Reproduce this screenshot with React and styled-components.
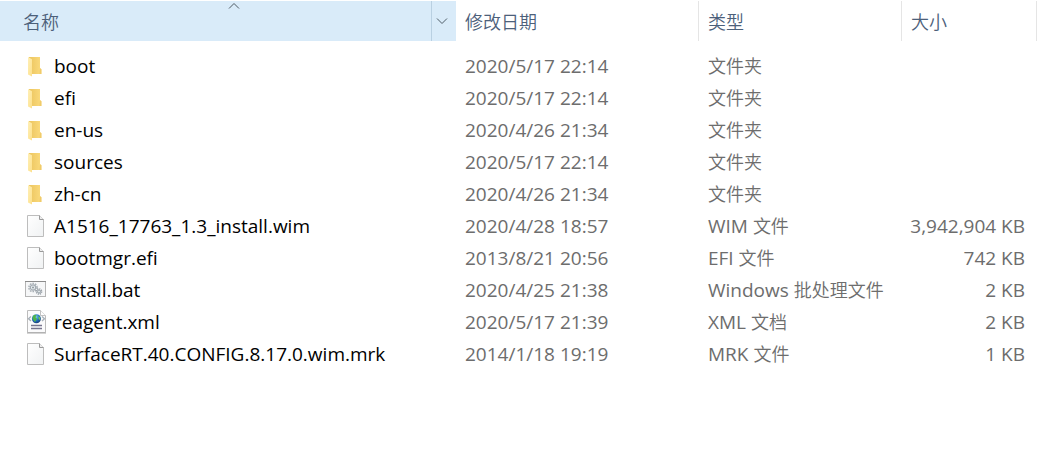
import React, { useState } from "react";
import styled, { createGlobalStyle } from "styled-components";

const GlobalStyle = createGlobalStyle`
    body {
        margin: 0;
        background: #ffffff;
        font-family: "Open Sans", "Noto Sans CJK SC", sans-serif;
    }
`;

const FileTable = styled.table`
    width: 100%;
    padding: 1px 1px 0 0;
    border-collapse: separate;
    border-spacing: 0;
    table-layout: fixed;
    tbody::before {
        content: "";
        display: block;
        height: 9px;
    }
`;

const Column = styled.col`
    width: ${props => props.$width || "auto"};
`;

const HeadCell = styled.th`
    position: relative;
    height: 40px;
    padding: 0;
    border-right: ${props => (props.$sorted ? "none" : "1px solid #e5e5e5")};
    background: ${props => (props.$sorted ? "#d9ebf9" : "#ffffff")};
    font-weight: normal;
`;

const HeadContent = styled.div`
    display: flex;
    height: 40px;
`;

const SortButton = styled.button`
    flex: 1;
    padding: 0 0 0 ${props => (props.$first ? "23px" : "9px")};
    border: none;
    background: none;
    color: #4c607a;
    font-family: "Noto Sans CJK SC", sans-serif;
    font-size: 18px;
    font-weight: 350;
    line-height: 40px;
    text-align: left;
`;

const FilterButton = styled.button`
    display: flex;
    align-items: center;
    justify-content: center;
    width: 25px;
    padding: 0 4px 0 0;
    border: none;
    border-left: 1px solid #b9d0e2;
    background: none;
`;

const SortArrow = styled.svg`
    position: absolute;
    top: 1px;
    left: 50%;
`;

const Cell = styled.td`
    height: 32px;
    padding: 0 0 0 9px;
    color: #6d6d6d;
    font-size: 19px;
    line-height: 32px;
    white-space: nowrap;
`;

const SizeCell = styled(Cell)`
    padding: 0 12px 0 0;
    text-align: right;
`;

const NameCell = styled(Cell)`
    padding: 0 0 0 24px;
    color: #000000;
`;

const FileName = styled.div`
    display: flex;
    align-items: center;
    gap: 6px;
`;

const Han = styled.span`
    font-family: "Noto Sans CJK SC", sans-serif;
    font-size: 18px;
    font-weight: 350;
    line-height: 20px;
`;

const Icon = styled.svg`
    flex: none;
    width: 24px;
    height: 24px;
`;

function FolderIcon() {
    return (
        <Icon viewBox="0 0 24 24" aria-hidden="true">
            <defs>
                <linearGradient id="folderFront" x1="0" y1="0" x2="1" y2="1">
                    <stop offset="0" stopColor="#fff0b8" />
                    <stop offset="1" stopColor="#fde08a" />
                </linearGradient>
                <linearGradient id="folderBack" x1="0" y1="0" x2="1" y2="0">
                    <stop offset="0" stopColor="#ecc55f" />
                    <stop offset="1" stopColor="#fbdb7d" />
                </linearGradient>
            </defs>
            <path d="M5 3H16V14L17.400 15.500V20H8L5 18Z" fill="url(#folderBack)" />
            <path d="M16 14L17.400 15.500V20H15.500Z" fill="#f0cb6b" />
            <path d="M4 3L8 5.300V22.600L4 20.500Z" fill="url(#folderFront)" />
        </Icon>
    );
}

function DocumentIcon() {
    return (
        <Icon viewBox="0 0 24 24" aria-hidden="true">
            <defs>
                <linearGradient id="paper" x1="0" y1="0" x2="1" y2="1">
                    <stop offset="0" stopColor="#ffffff" />
                    <stop offset="1" stopColor="#f0f2f3" />
                </linearGradient>
            </defs>
            <path d="M3.500 1.500H15.500L19.500 5.500V22.500H3.500Z" fill="url(#paper)" stroke="#bdbdbd" />
            <path d="M15.500 1.500V5.500H19.500" fill="#ededed" stroke="#9a9a9a" />
        </Icon>
    );
}

function BatchIcon() {
    return (
        <Icon viewBox="0 0 24 24" aria-hidden="true">
            <rect x="1.500" y="3.500" width="20" height="15" fill="#f6f7f8" stroke="#b5b5b5" />
            <path d="M1 3.500H22" stroke="#8c8c8c" />
            <circle cx="9" cy="9.500" r="4.100" fill="none" stroke="#a9b0b6" strokeWidth="1.500" strokeDasharray="1.600 1" />
            <circle cx="9" cy="9.500" r="2.700" fill="#e8edf0" stroke="#a3abb2" strokeWidth="1.200" />
            <circle cx="9" cy="9.500" r="1" fill="#8f999f" />
            <circle cx="15" cy="13.500" r="2.700" fill="none" stroke="#939ba2" strokeWidth="1.300" strokeDasharray="1.200 .9" />
            <circle cx="15" cy="13.500" r="1.600" fill="#dce3e7" stroke="#8e989f" />
        </Icon>
    );
}

function XmlIcon() {
    return (
        <Icon viewBox="0 0 24 24" aria-hidden="true">
            <defs>
                <radialGradient id="globe" cx=".4" cy=".3" r=".75">
                    <stop offset="0" stopColor="#8ed4f5" />
                    <stop offset=".5" stopColor="#2579c5" />
                    <stop offset="1" stopColor="#173978" />
                </radialGradient>
            </defs>
            <path d="M3.500 .5H16.500L21.500 5.500V22.500H3.500Z" fill="#fbfbfc" stroke="#bcbcbc" />
            <path d="M16.500 .5V5.500H21.500" fill="#ffffff" stroke="#c2c2c2" />
            <path d="M3 23H22" stroke="#a9a9a9" />
            <path d="M7 6.500L4.500 8.700L7 11M18 6.500L20.500 8.700L18 11" fill="none" stroke="#a7b0b8" strokeWidth="1.300" />
            <circle cx="12.400" cy="8.700" r="4.500" fill="url(#globe)" />
            <path d="M9 6Q11 4 12.600 5L11.500 7.300L13 9L11 12Q9.500 10 8.500 8.500Z" fill="#4fb44a" />
            <path d="M14.500 6L16.300 7.500L16 10L14.500 9Z" fill="#69c553" />
            <path d="M7 15.500H18M7 18.500H18" stroke="#77758e" strokeWidth="1.300" />
        </Icon>
    );
}

const icons = {
    folder: FolderIcon,
    document: DocumentIcon,
    batch: BatchIcon,
    xml: XmlIcon
};

const files = [
    { name: "boot", date: "2020/5/17 22:14", type: "文件夹", icon: "folder" },
    { name: "efi", date: "2020/5/17 22:14", type: "文件夹", icon: "folder" },
    { name: "en-us", date: "2020/4/26 21:34", type: "文件夹", icon: "folder" },
    { name: "sources", date: "2020/5/17 22:14", type: "文件夹", icon: "folder" },
    { name: "zh-cn", date: "2020/4/26 21:34", type: "文件夹", icon: "folder" },
    { name: "A1516_17763_1.3_install.wim", date: "2020/4/28 18:57", prefix: "WIM", type: "文件", size: "3,942,904 KB", icon: "document" },
    { name: "bootmgr.efi", date: "2013/8/21 20:56", prefix: "EFI", type: "文件", size: "742 KB", icon: "document" },
    { name: "install.bat", date: "2020/4/25 21:38", prefix: "Windows", type: "批处理文件", size: "2 KB", icon: "batch" },
    { name: "reagent.xml", date: "2020/5/17 21:39", prefix: "XML", type: "文档", size: "2 KB", icon: "xml" },
    { name: "SurfaceRT.40.CONFIG.8.17.0.wim.mrk", date: "2014/1/18 19:19", prefix: "MRK", type: "文件", size: "1 KB", icon: "document" }
];

function FileRow({ file }) {
    const FileIcon = icons[file.icon];

    return (
        <tr>
            <NameCell>
                <FileName>
                    <FileIcon />
                    {file.name}
                </FileName>
            </NameCell>
            <Cell>{file.date}</Cell>
            <Cell>
                {file.prefix && `${file.prefix} `}
                <Han>{file.type}</Han>
            </Cell>
            <SizeCell>{file.size}</SizeCell>
        </tr>
    );
}

function App() {
    const [ascending, setAscending] = useState(true);
    const rows = ascending ? files : [...files].reverse();

    return (
        <>
            <GlobalStyle />
            <FileTable lang="zh-CN">
                <colgroup>
                    <Column />
                    <Column $width="243px" />
                    <Column $width="203px" />
                    <Column $width="135px" />
                </colgroup>
                <thead>
                    <tr>
                        <HeadCell $sorted aria-sort={ascending ? "ascending" : "descending"}>
                            <HeadContent>
                                <SortButton $first onClick={() => setAscending(!ascending)}>名称</SortButton>
                                <FilterButton aria-label="筛选">
                                    <svg width="12" height="8" viewBox="0 0 12 8" fill="none" stroke="#4f5d68">
                                        <path d="M1 1.500L6 6.500L11 1.500" />
                                    </svg>
                                </FilterButton>
                            </HeadContent>
                            <SortArrow width="12" height="8" viewBox="0 0 12 8" fill="none" stroke="#4f5a63">
                                <path d={ascending ? "M1 6.500L6 1.500L11 6.500" : "M1 1.500L6 6.500L11 1.500"} />
                            </SortArrow>
                        </HeadCell>
                        <HeadCell><HeadContent><SortButton>修改日期</SortButton></HeadContent></HeadCell>
                        <HeadCell><HeadContent><SortButton>类型</SortButton></HeadContent></HeadCell>
                        <HeadCell><HeadContent><SortButton>大小</SortButton></HeadContent></HeadCell>
                    </tr>
                </thead>
                <tbody>
                    {rows.map(file => <FileRow key={file.name} file={file} />)}
                </tbody>
            </FileTable>
        </>
    );
}

export default App;
